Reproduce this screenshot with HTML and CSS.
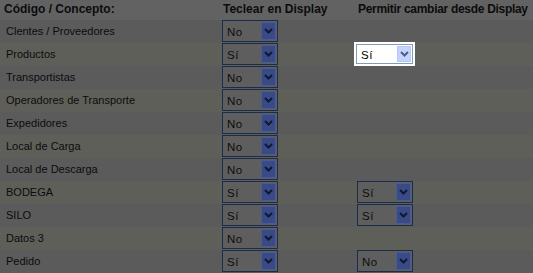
FILE: index.html
```html
<!DOCTYPE html>
<html lang="es">
<head>
<meta charset="utf-8">
<link rel="stylesheet" href="styles.css">
</head>
<body>
<div class="grid">
  <div class="row head">
    <div class="c1">Código / Concepto:</div>
    <div class="c2">Teclear en Display</div>
    <div class="c3">Permitir cambiar desde Display</div>
  </div>
  <div class="row odd">
    <div class="c1">Clentes / Proveedores</div>
    <div class="c2"><div class="combo"><span class="val">No</span><span class="btn"><svg width="9" height="6" viewBox="0 0 9 6"><polyline points="1,1 4.5,4.5 8,1" fill="none" stroke="currentColor" stroke-width="2"/></svg></span></div></div>
    <div class="c3"></div>
  </div>
  <div class="row even">
    <div class="c1">Productos</div>
    <div class="c2"><div class="combo"><span class="val">Sí</span><span class="btn"><svg width="9" height="6" viewBox="0 0 9 6"><polyline points="1,1 4.5,4.5 8,1" fill="none" stroke="currentColor" stroke-width="2"/></svg></span></div></div>
    <div class="c3"><div class="combo focus"><span class="val">Sí</span><span class="btn"><svg width="9" height="6" viewBox="0 0 9 6"><polyline points="1,1 4.5,4.5 8,1" fill="none" stroke="currentColor" stroke-width="2"/></svg></span></div></div>
  </div>
  <div class="row odd">
    <div class="c1">Transportistas</div>
    <div class="c2"><div class="combo"><span class="val">No</span><span class="btn"><svg width="9" height="6" viewBox="0 0 9 6"><polyline points="1,1 4.5,4.5 8,1" fill="none" stroke="currentColor" stroke-width="2"/></svg></span></div></div>
    <div class="c3"></div>
  </div>
  <div class="row even">
    <div class="c1">Operadores de Transporte</div>
    <div class="c2"><div class="combo"><span class="val">No</span><span class="btn"><svg width="9" height="6" viewBox="0 0 9 6"><polyline points="1,1 4.5,4.5 8,1" fill="none" stroke="currentColor" stroke-width="2"/></svg></span></div></div>
    <div class="c3"></div>
  </div>
  <div class="row odd">
    <div class="c1">Expedidores</div>
    <div class="c2"><div class="combo"><span class="val">No</span><span class="btn"><svg width="9" height="6" viewBox="0 0 9 6"><polyline points="1,1 4.5,4.5 8,1" fill="none" stroke="currentColor" stroke-width="2"/></svg></span></div></div>
    <div class="c3"></div>
  </div>
  <div class="row even">
    <div class="c1">Local de Carga</div>
    <div class="c2"><div class="combo"><span class="val">No</span><span class="btn"><svg width="9" height="6" viewBox="0 0 9 6"><polyline points="1,1 4.5,4.5 8,1" fill="none" stroke="currentColor" stroke-width="2"/></svg></span></div></div>
    <div class="c3"></div>
  </div>
  <div class="row odd">
    <div class="c1">Local de Descarga</div>
    <div class="c2"><div class="combo"><span class="val">No</span><span class="btn"><svg width="9" height="6" viewBox="0 0 9 6"><polyline points="1,1 4.5,4.5 8,1" fill="none" stroke="currentColor" stroke-width="2"/></svg></span></div></div>
    <div class="c3"></div>
  </div>
  <div class="row even">
    <div class="c1">BODEGA</div>
    <div class="c2"><div class="combo"><span class="val">Sí</span><span class="btn"><svg width="9" height="6" viewBox="0 0 9 6"><polyline points="1,1 4.5,4.5 8,1" fill="none" stroke="currentColor" stroke-width="2"/></svg></span></div></div>
    <div class="c3"><div class="combo"><span class="val">Sí</span><span class="btn"><svg width="9" height="6" viewBox="0 0 9 6"><polyline points="1,1 4.5,4.5 8,1" fill="none" stroke="currentColor" stroke-width="2"/></svg></span></div></div>
  </div>
  <div class="row odd">
    <div class="c1">SILO</div>
    <div class="c2"><div class="combo"><span class="val">Sí</span><span class="btn"><svg width="9" height="6" viewBox="0 0 9 6"><polyline points="1,1 4.5,4.5 8,1" fill="none" stroke="currentColor" stroke-width="2"/></svg></span></div></div>
    <div class="c3"><div class="combo"><span class="val">Sí</span><span class="btn"><svg width="9" height="6" viewBox="0 0 9 6"><polyline points="1,1 4.5,4.5 8,1" fill="none" stroke="currentColor" stroke-width="2"/></svg></span></div></div>
  </div>
  <div class="row even">
    <div class="c1">Datos 3</div>
    <div class="c2"><div class="combo"><span class="val">No</span><span class="btn"><svg width="9" height="6" viewBox="0 0 9 6"><polyline points="1,1 4.5,4.5 8,1" fill="none" stroke="currentColor" stroke-width="2"/></svg></span></div></div>
    <div class="c3"></div>
  </div>
  <div class="row odd">
    <div class="c1">Pedido</div>
    <div class="c2"><div class="combo"><span class="val">Sí</span><span class="btn"><svg width="9" height="6" viewBox="0 0 9 6"><polyline points="1,1 4.5,4.5 8,1" fill="none" stroke="currentColor" stroke-width="2"/></svg></span></div></div>
    <div class="c3"><div class="combo"><span class="val">No</span><span class="btn"><svg width="9" height="6" viewBox="0 0 9 6"><polyline points="1,1 4.5,4.5 8,1" fill="none" stroke="currentColor" stroke-width="2"/></svg></span></div></div>
  </div>
</div>
</body>
</html>
```
FILE: styles.css
```css
html, body {
  margin: 0;
  padding: 0;
  background: #626262;
}
body {
  font-family: "Liberation Sans", Arial, sans-serif;
  font-size: 11px;
  color: #0c0c0c;
  width: 533px;
  height: 273px;
  overflow: hidden;
}
.grid {
  display: flex;
  flex-direction: column;
}
.row {
  display: grid;
  grid-template-columns: 222px 135px 1fr;
  height: 23px;
}
.row.head {
  height: 20px;
  font-size: 12px;
  font-weight: bold;
  align-items: center;
  background: #626262;
  white-space: nowrap;
}
.row.head .c1 { padding-left: 4px; padding-bottom: 3px; }
.row.head .c2 { padding-left: 1px; padding-bottom: 3px; }
.row.head .c3 { padding-left: 1px; padding-bottom: 3px; letter-spacing: -0.3px; }
.row.odd { background: #5b5b5b; }
.row.even { background: #5f5f5a; }
.row .c1 {
  display: flex;
  align-items: center;
  padding-left: 6px;
  padding-bottom: 1px;
}
.combo {
  box-sizing: border-box;
  width: 56px;
  height: 22px;
  border: 1px solid #1c2d4b;
  display: flex;
  align-items: center;
  justify-content: space-between;
  padding: 1px 1px 1px 4px;
  background: #5e5e5e;
  font-size: 11.5px;
  letter-spacing: 0.5px;
}
.combo .val {
  padding-top: 1px;
}
.combo .btn {
  box-sizing: border-box;
  width: 15px;
  height: 18px;
  background: #3a4a84;
  border: 1px solid #4a5a92;
  color: #0e1838;
  display: flex;
  align-items: center;
  justify-content: center;
}
.combo.focus {
  width: 57px;
  height: 20px;
  margin: 1px 0 0 -1px;
  border-color: #7f9db9;
  background: #ffffff;
  outline: 2px solid #ffffff;
  color: #000;
}
.combo.focus .btn {
  width: 14px;
  height: 16px;
  background: #c4d4fc;
  border-color: #b6c8f4;
  color: #4d6185;
}
```
